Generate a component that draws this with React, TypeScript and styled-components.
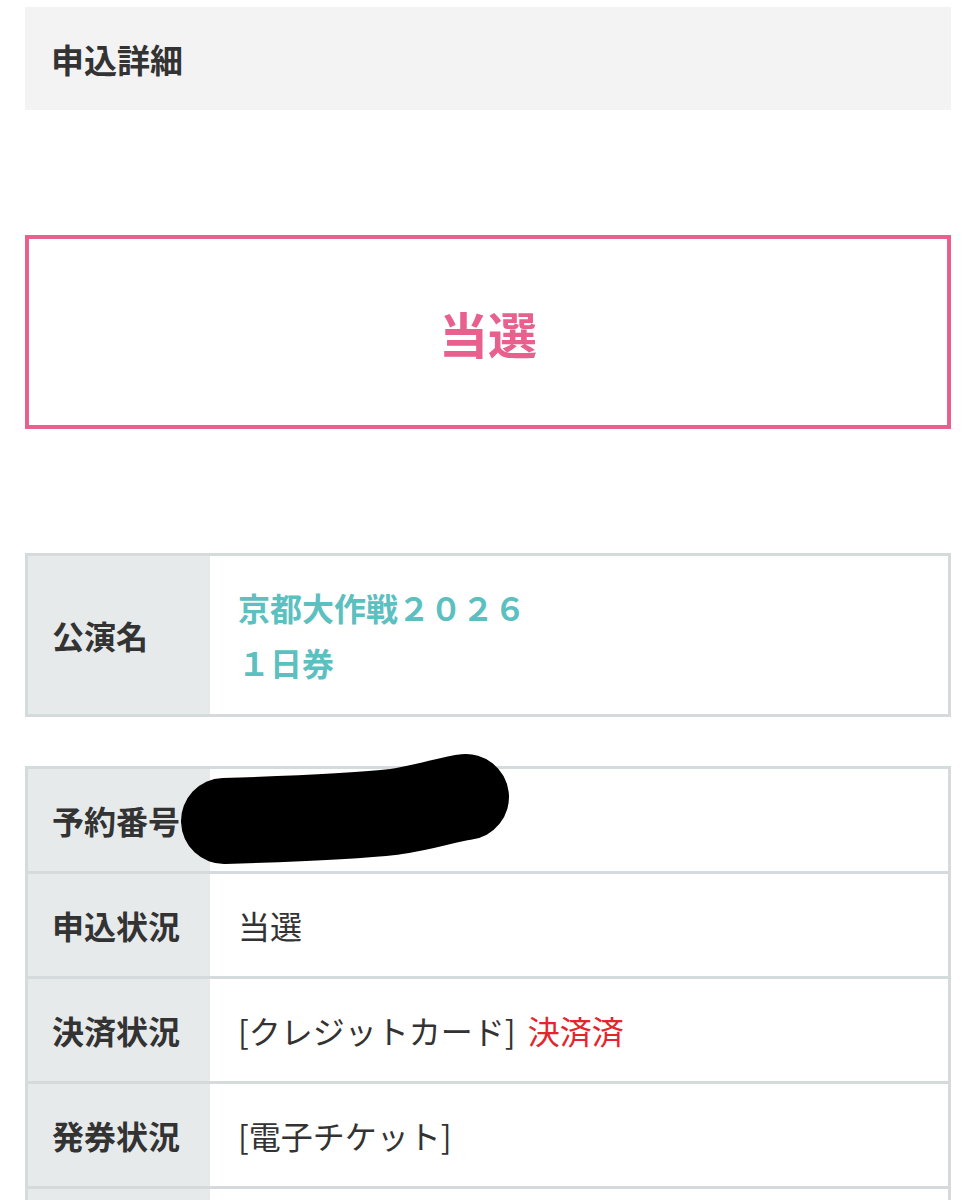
import React from "react";
import styled, { createGlobalStyle } from "styled-components";

const Global = createGlobalStyle`
  html, body { margin: 0; padding: 0; background: #ffffff; }
  body {
    font-family: "Noto Sans CJK JP", "Noto Sans", sans-serif;
    color: #333333;
  }
`;

const Page = styled.div`
  padding: 7px 25px 0 25px;
  display: flex;
  flex-direction: column;
`;

const Header = styled.div`
  height: 103px;
  background: #f3f3f3;
  display: flex;
  align-items: center;
  padding-left: 26px;
  font-size: 33px;
  font-weight: 700;
  color: #333333;
`;

const ResultBox = styled.div`
  margin-top: 125px;
  height: 194px;
  box-sizing: border-box;
  border: 4px solid #e8608d;
  display: flex;
  align-items: center;
  justify-content: center;
  font-size: 49px;
  font-weight: 700;
  color: #e8608d;
`;

const Table = styled.div<{ $gap: number }>`
  position: relative;
  margin-top: ${(p) => p.$gap}px;
  border: 3px solid #d5dadc;
  display: flex;
  flex-direction: column;
`;

const Row = styled.div`
  display: grid;
  grid-template-columns: 182px 1fr;
  & + & {
    border-top: 3px solid #d5dadc;
  }
`;

const Label = styled.div`
  background: #e6eaeb;
  display: flex;
  align-items: center;
  padding: 0 0 0 24px;
  font-size: 32px;
  font-weight: 700;
  color: #333333;
  min-height: 102px;
`;

const Value = styled.div<{ $pad: number }>`
  display: flex;
  flex-direction: column;
  justify-content: center;
  padding: ${(p) => p.$pad}px 28px;
  font-size: 32px;
  font-weight: 400;
  line-height: 55px;
  color: #333333;
  background: #ffffff;
`;

const EventName = styled.span`
  color: #5cbfc0;
  font-weight: 700;
`;

const Paid = styled.span`
  color: #e2262c;
  margin-left: 5px;
`;

const Redaction = styled.svg`
  position: absolute;
  left: 150px;
  top: -12px;
  width: 340px;
  height: 115px;
  overflow: visible;
`;

export default function App() {
  return (
    <>
      <Global />
      <Page>
        <Header>申込詳細</Header>
        <ResultBox>当選</ResultBox>

        <Table $gap={124}>
          <Row>
            <Label>公演名</Label>
            <Value $pad={24}>
              <EventName>京都大作戦２０２６</EventName>
              <EventName>１日券</EventName>
            </Value>
          </Row>
        </Table>

        <Table $gap={49}>
          <Row>
            <Label>予約番号</Label>
            <Value $pad={0}>&nbsp;</Value>
          </Row>
          <Row>
            <Label>申込状況</Label>
            <Value $pad={0}>当選</Value>
          </Row>
          <Row>
            <Label>決済状況</Label>
            <Value $pad={0}>
              <span>
                [クレジットカード]{" "}<Paid>決済済</Paid>
              </span>
            </Value>
          </Row>
          <Row>
            <Label>発券状況</Label>
            <Value $pad={0}>[電子チケット]</Value>
          </Row>
          <Row>
            <Label />
            <Value $pad={0} />
          </Row>
          <Redaction viewBox="0 0 340 115">
            <path
              d="M46 64 C 110 62, 170 60, 215 55 C 250 50, 270 42, 288 40"
              stroke="#000"
              strokeWidth="86"
              strokeLinecap="round"
              fill="none"
            />
          </Redaction>
        </Table>
      </Page>
    </>
  );
}
